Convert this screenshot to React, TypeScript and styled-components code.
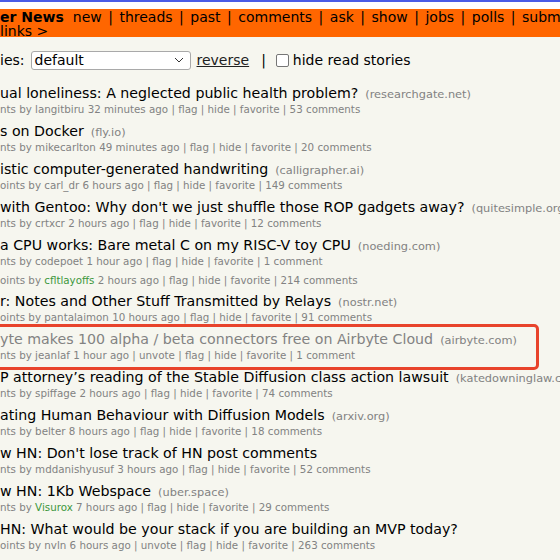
import styled, { createGlobalStyle } from 'styled-components';

const GlobalStyle = createGlobalStyle`
	html, body {
		margin: 0;
		padding: 0;
		background: #f6f6ef;
		overflow: hidden;
	}
	body {
		font-family: "DejaVu Sans", Verdana, sans-serif;
	}
`;

type Story = {
	title?: string;
	site?: string;
	by: string;
	lead: string;
	rest: string;
	green?: boolean;
	seen?: boolean;
	marked?: boolean;
};

const stories: Story[] = [
	{ title: 'ual loneliness: A neglected public health problem?', site: '(researchgate.net)', lead: 'nts by ', by: 'langitbiru', rest: ' 32 minutes ago | flag | hide | favorite | 53 comments' },
	{ title: 's on Docker', site: '(fly.io)', lead: 'nts by ', by: 'mikecarlton', rest: ' 49 minutes ago | flag | hide | favorite | 20 comments' },
	{ title: 'istic computer-generated handwriting', site: '(calligrapher.ai)', lead: 'oints by ', by: 'carl_dr', rest: ' 6 hours ago | flag | hide | favorite | 149 comments' },
	{ title: "with Gentoo: Why don't we just shuffle those ROP gadgets away?", site: '(quitesimple.org)', lead: 'nts by ', by: 'crtxcr', rest: ' 2 hours ago | flag | hide | favorite | 12 comments' },
	{ title: 'a CPU works: Bare metal C on my RISC-V toy CPU', site: '(noeding.com)', lead: 'nts by ', by: 'codepoet', rest: ' 1 hour ago | flag | hide | favorite | 1 comment' },
	{ lead: 'oints by ', by: 'cfltlayoffs', green: true, rest: ' 2 hours ago | flag | hide | favorite | 214 comments' },
	{ title: 'r: Notes and Other Stuff Transmitted by Relays', site: '(nostr.net)', lead: 'oints by ', by: 'pantalaimon', rest: ' 10 hours ago | flag | hide | favorite | 91 comments' },
	{ title: 'yte makes 100 alpha / beta connectors free on Airbyte Cloud', site: '(airbyte.com)', lead: 'nts by ', by: 'jeanlaf', rest: ' 1 hour ago | unvote | flag | hide | favorite | 1 comment', seen: true, marked: true },
	{ title: 'P attorney’s reading of the Stable Diffusion class action lawsuit', site: '(katedowninglaw.com)', lead: 'nts by ', by: 'spiffage', rest: ' 2 hours ago | flag | hide | favorite | 74 comments' },
	{ title: 'ating Human Behaviour with Diffusion Models', site: '(arxiv.org)', lead: 'nts by ', by: 'belter', rest: ' 8 hours ago | flag | hide | favorite | 18 comments' },
	{ title: "w HN: Don't lose track of HN post comments", lead: 'nts by ', by: 'mddanishyusuf', rest: ' 3 hours ago | flag | hide | favorite | 52 comments' },
	{ title: 'w HN: 1Kb Webspace', site: '(uber.space)', lead: 'nts by ', by: 'Visurox', green: true, rest: ' 7 hours ago | flag | hide | favorite | 29 comments' },
	{ title: 'HN: What would be your stack if you are building an MVP today?', lead: 'oints by ', by: 'nvln', rest: ' 6 hours ago | unvote | flag | hide | favorite | 263 comments' },
];

const TopLine = styled.div`
	height: 2px;
	background: #4a5ce6;
	border-bottom: 7px solid #ffffff;
`;

const Header = styled.header`
	box-sizing: border-box;
	background: #ff6600;
	height: 28px;
	padding-top: 1px;
	font-size: 14px;
	line-height: 14px;
	color: #000;
	white-space: nowrap;
	overflow: hidden;
`;

const Brand = styled.b`
	margin-right: 9px;
`;

const NavLink = styled.span``;

const Sep = styled.span`
	margin: 0 6.5px;
`;

const Controls = styled.div`
	display: flex;
	align-items: center;
	height: 20px;
	margin-top: 13px;
	font-size: 14px;
	color: #000;
	white-space: nowrap;
`;

const Select = styled.div`
	display: flex;
	align-items: center;
	justify-content: space-between;
	width: 160px;
	height: 19px;
	box-sizing: border-box;
	margin-left: 6px;
	padding: 0 6px 0 3px;
	background: #fff;
	border: 1px solid #a9a9a9;
	border-radius: 3px;
`;

const Reverse = styled.span`
	margin-left: 6px;
	text-decoration: underline;
	color: #222;
`;

const Bar = styled.span`
	margin: 0 10px 0 12px;
`;

const Check = styled.span`
	width: 11px;
	height: 11px;
	border: 1px solid #767676;
	border-radius: 2px;
	background: #fff;
	margin-right: 4px;
`;

const List = styled.div`
	margin-top: 14px;
	white-space: nowrap;
`;

const Row = styled.div<{ $marked?: boolean }>`
	position: relative;
	padding-bottom: 5px;
	${({ $marked }) =>
		$marked &&
		`
		&::after {
			content: '';
			position: absolute;
			left: -10px;
			right: 21px;
			top: -6px;
			bottom: -2px;
			border: 3px solid #e8432b;
			border-radius: 5px;
		}
	`}
`;

const Title = styled.div<{ $seen?: boolean }>`
	height: 18px;
	font-size: 14.2px;
	line-height: 18px;
	color: ${({ $seen }) => ($seen ? '#828282' : '#000')};
`;

const Site = styled.span`
	font-size: 11.35px;
	line-height: 1;
	color: #828282;
	margin-left: 7px;
`;

const Sub = styled.div<{ $alone?: boolean }>`
	height: ${({ $alone }) => ($alone ? 13 : 15)}px;
	font-size: 10.3px;
	line-height: ${({ $alone }) => ($alone ? 13 : 15)}px;
	color: #828282;
`;

const User = styled.span<{ $green?: boolean }>`
	color: ${({ $green }) => ($green ? '#3c963c' : '#828282')};
`;

const Chevron = () => (
	<svg width="10" height="6" viewBox="0 0 10 6">
		<path d="M1 1l4 4 4-4" fill="none" stroke="#333" strokeWidth="1" />
	</svg>
);

export default function App() {
	const nav = ['new', 'threads', 'past', 'comments', 'ask', 'show', 'jobs', 'polls', 'submit'];
	return (
		<>
			<GlobalStyle />
			<TopLine />
			<Header>
				<div>
					<Brand>er News</Brand>
					{nav.map((n, i) => (
						<NavLink key={n}>
							{i > 0 && <Sep>|</Sep>}
							{n}
						</NavLink>
					))}
				</div>
				<div>links &gt;</div>
			</Header>
			<Controls>
				ies:
				<Select>
					default
					<Chevron />
				</Select>
				<Reverse>reverse</Reverse>
				<Bar>|</Bar>
				<Check />
				hide read stories
			</Controls>
			<List>
				{stories.map((s, i) => (
					<Row key={i} $marked={s.marked}>
						{s.title && (
							<Title $seen={s.seen}>
								{s.title}
								{s.site && <Site>{s.site}</Site>}
							</Title>
						)}
						<Sub $alone={!s.title}>
							{s.lead}
							<User $green={s.green}>{s.by}</User>
							{s.rest}
						</Sub>
					</Row>
				))}
			</List>
		</>
	);
}
